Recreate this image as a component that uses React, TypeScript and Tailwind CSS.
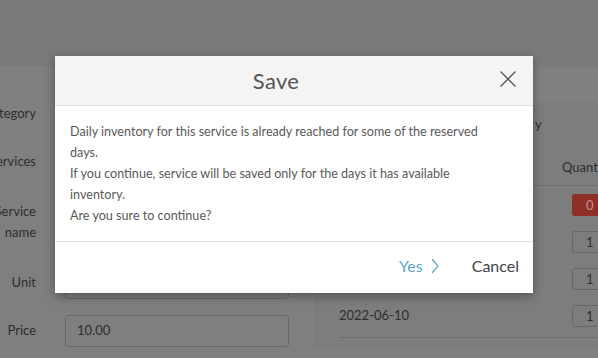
import React from 'react'

const rows = [
  { date: '', qty: '0', warn: true },
  { date: '', qty: '1' },
  { date: '', qty: '1' },
  { date: '2022-06-10', qty: '1' },
]

function Background() {
  return (
    <div className="absolute inset-0 bg-[#7f7f7f] text-[#2e2e2e]">
      {/* top bar */}
      <div className="h-[66px] bg-[#7a7a7a]" />
      <div className="flex">
        {/* form column */}
        <div className="w-[314px] pt-[37px] text-[13px]">
          <div className="flex items-center h-[22px]">
            <div className="w-[36px] whitespace-nowrap flex justify-end">Category</div>
          </div>
          <div className="flex items-center h-[22px] mt-[26px]">
            <div className="w-[36px] whitespace-nowrap flex justify-end">Services</div>
          </div>
          <div className="flex items-center mt-[28px]">
            <div className="w-[36px] leading-[21px] flex flex-col items-end whitespace-nowrap">
              <span>Service</span>
              <span>name</span>
            </div>
          </div>
          <div className="flex items-center h-[32px] mt-[24px]">
            <div className="w-[36px] text-right">Unit</div>
            <div className="ml-[29px] w-[224px] h-[32px] border border-[#676767] rounded-[3px]" />
          </div>
          <div className="flex items-center h-[32px] mt-[16px]">
            <div className="w-[36px] text-right">Price</div>
            <div className="ml-[29px] w-[224px] h-[32px] border border-[#676767] rounded-[3px] px-[11px] flex items-center">
              10.00
            </div>
          </div>
        </div>
        {/* availability column */}
        <div className="flex-1 border-l-[5px] border-[#7c7c7c] bg-[#7d7d7d]">
          <div className="h-[34px] mt-[2px] bg-[#818181]" />
          <div className="pl-[20px] text-[13px]">
            <div className="h-[24px] pl-[196px] pt-[16px] leading-none">y</div>
            <div className="mt-[30px] flex justify-end h-[30px] border-b border-[#6e6e6e] items-start pt-[1px] leading-[20px] overflow-hidden whitespace-nowrap">
              <span className="w-[36px]">Quantity</span>
            </div>
            {rows.map((r, i) => (
              <div key={i} className="flex items-center h-[37px] justify-between">
                <span>{r.date}</span>
                <div
                  className={
                    r.warn
                      ? 'w-[30px] h-[22px] rounded-[3px] bg-[#8f2f28] text-[#c98f8a] pl-[14px] leading-[22px] -mr-[4px]'
                      : 'w-[30px] h-[22px] rounded-[3px] border border-[#676767] pl-[13px] leading-[20px] -mr-[4px]'
                  }
                >
                  {r.qty}
                </div>
              </div>
            ))}
            <div className="border-t border-[#6e6e6e] mt-[3px]" />
          </div>
        </div>
      </div>
    </div>
  )
}

export default function App() {
  return (
    <div
      className="relative w-[598px] h-[358px] overflow-hidden"
      style={{ fontFamily: 'Lato, "Liberation Sans", sans-serif' }}
    >
      <Background />

      <div className="absolute left-[55px] top-[56px] w-[478px] bg-white shadow-[0_3px_10px_rgba(0,0,0,0.35)]">
        <div className="relative h-[50px] bg-[#f4f4f4] border-b border-[#e2e2e2] flex items-center justify-center pr-[36px]">
          <h2 className="text-[22px] text-[#555] leading-none tracking-[0.3px]">Save</h2>
          <button className="absolute right-[16px] top-[14px] w-[18px] h-[18px]">
            <svg viewBox="0 0 18 18" className="w-[18px] h-[18px]" fill="none" stroke="#555" strokeWidth="1.3">
              <path d="M1.5 1.5 L16.5 16.5 M16.5 1.5 L1.5 16.5" />
            </svg>
          </button>
        </div>
        <div className="pl-[15px] pr-[32px] py-[15px] text-[12.6px] leading-[21px] text-[#5a5a5a]">
          <p>Daily inventory for this service is already reached for some of the reserved days.</p>
          <p>If you continue, service will be saved only for the days it has available inventory.</p>
          <p>Are you sure to continue?</p>
        </div>
        <div className="h-[52px] border-t border-[#e2e2e2] flex items-center justify-end pr-[14px] text-[16px]">
          <button className="flex items-center gap-[8px] text-[#5aa6c8] -mt-[3px]">
            Yes
            <svg viewBox="0 0 8 16" className="w-[8px] h-[16px]" fill="none" stroke="#5aa6c8" strokeWidth="1.2">
              <path d="M1 1 L7 8 L1 15" />
            </svg>
          </button>
          <button className="ml-[33px] text-[#444] -mt-[3px]">Cancel</button>
        </div>
      </div>
    </div>
  )
}
